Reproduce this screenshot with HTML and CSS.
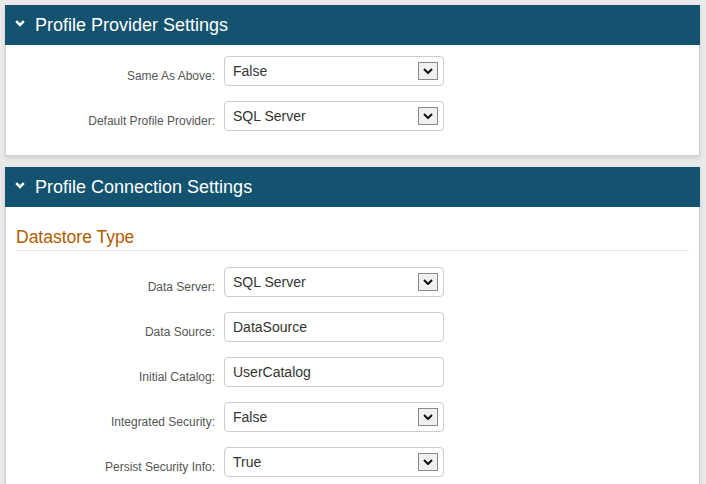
FILE: index.html
```html
<!DOCTYPE html>
<html lang="en">
<head>
  <meta charset="UTF-8" />
  <title>Profile Settings</title>
  <link rel="stylesheet" href="styles.css">
</head>
<body>

  <!-- Profile provider -->
  <div class="panel">
    <div class="panel-head"><svg class="chev" width="10" height="7" viewBox="0 0 10 7"><polyline points="1.2,1.2 5,5 8.8,1.2" /></svg><span class="title">Profile Provider Settings</span></div>
    <div class="panel-body">
      <div class="row">
        <label>Same As Above:</label>
        <div class="select"><span>False</span><span class="arrow"><svg width="10" height="6" viewBox="0 0 10 6"><polyline points="1,1 5,5 9,1" /></svg></span></div>
      </div>
      <div class="row">
        <label>Default Profile Provider:</label>
        <div class="select"><span>SQL Server</span><span class="arrow"><svg width="10" height="6" viewBox="0 0 10 6"><polyline points="1,1 5,5 9,1" /></svg></span></div>
      </div>
    </div>
  </div>

  <!-- Connection -->
  <div class="panel">
    <div class="panel-head"><svg class="chev" width="10" height="7" viewBox="0 0 10 7"><polyline points="1.2,1.2 5,5 8.8,1.2" /></svg><span class="title">Profile Connection Settings</span></div>
    <div class="panel-body">
      <h2>Datastore Type</h2>
      <div class="row">
        <label>Data Server:</label>
        <div class="select"><span>SQL Server</span><span class="arrow"><svg width="10" height="6" viewBox="0 0 10 6"><polyline points="1,1 5,5 9,1" /></svg></span></div>
      </div>
      <div class="row">
        <label>Data Source:</label>
        <div class="textbox">DataSource</div>
      </div>
      <div class="row">
        <label>Initial Catalog:</label>
        <div class="textbox">UserCatalog</div>
      </div>
      <div class="row">
        <label>Integrated Security:</label>
        <div class="select"><span>False</span><span class="arrow"><svg width="10" height="6" viewBox="0 0 10 6"><polyline points="1,1 5,5 9,1" /></svg></span></div>
      </div>
      <div class="row">
        <label>Persist Security Info:</label>
        <div class="select"><span>True</span><span class="arrow"><svg width="10" height="6" viewBox="0 0 10 6"><polyline points="1,1 5,5 9,1" /></svg></span></div>
      </div>
    </div>
  </div>

</body>
</html>
```

FILE: styles.css
```css
* {
  margin: 0;
  padding: 0;
  box-sizing: border-box;
}

html, body {
  overflow: hidden;
}

body {
  font-family: 'Liberation Sans', Arial, sans-serif;
  background: #e9e9e9;
  color: #333;
  padding: 5px 6px 0 5px;
}

.panel {
  margin-bottom: 11px;
  box-shadow: 0 2px 4px rgba(0,0,0,0.12);
}

.panel-head {
  display: flex;
  align-items: center;
  height: 40px;
  padding-left: 10px;
  background: #14536f;
  color: #fff;
}

.chev {
  display: block;
  flex: none;
  margin: -3px 10px 0 0;
}

.chev polyline {
  fill: none;
  stroke: #fff;
  stroke-width: 2.6;
}

.title {
  font-size: 18px;
  line-height: 40px;
}

.panel-body {
  display: flex;
  flex-direction: column;
  gap: 15px;
  background: #fff;
  border: 1px solid #cfcfcf;
  border-top: none;
  padding: 11px 10px 24px;
}

.panel-body h2 {
  font-size: 17.5px;
  font-weight: normal;
  line-height: 20px;
  color: #b25d00;
  margin-top: 9px;
  padding-bottom: 3px;
  border-bottom: 1px solid #e6e6e6;
  margin-bottom: 1px;
}

.row {
  display: grid;
  grid-template-columns: 199px 220px;
  column-gap: 9px;
}

.row label {
  text-align: right;
  font-size: 12px;
  line-height: 16px;
  padding-top: 12px;
  color: #555;
}

.select, .textbox {
  display: flex;
  align-items: center;
  justify-content: space-between;
  height: 30px;
  border: 1px solid #cccccc;
  border-radius: 4px;
  padding: 0 5px 0 8px;
  font-size: 14px;
  color: #333;
  background: #fff;
}

.arrow {
  display: flex;
  align-items: center;
  justify-content: center;
  width: 20px;
  height: 18px;
  border: 1px solid #8a8a8a;
  background: #f0f0f0;
}

.arrow polyline {
  fill: none;
  stroke: #111;
  stroke-width: 2;
}
```
